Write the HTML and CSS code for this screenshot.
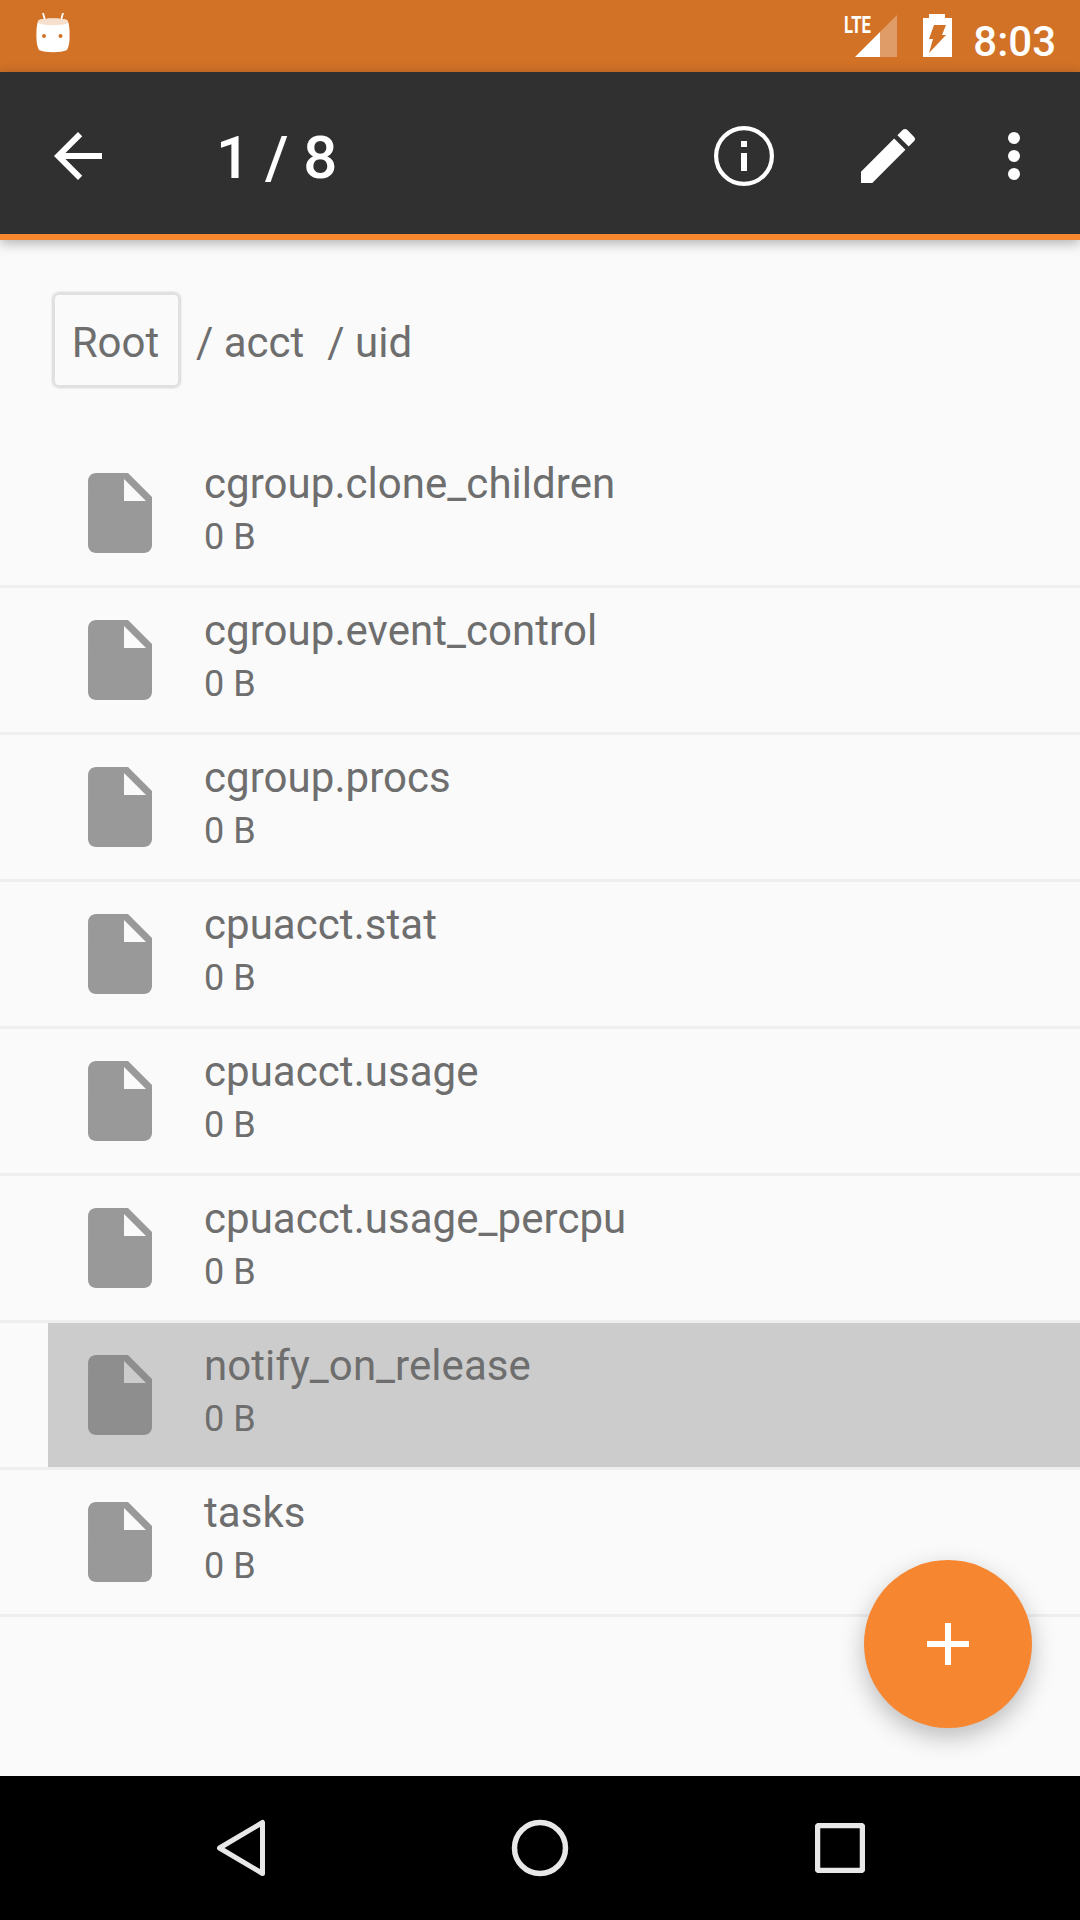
FILE: index.html
```html
<!DOCTYPE html>
<html lang="en">
<head>
    <meta charset="UTF-8">
    <title>1 / 8</title>
    <link rel="stylesheet" href="styles.css">
</head>
<body>
    <div class="phone">
        <!-- Status bar -->
        <div class="status-bar">
            <svg class="bot-icon" viewBox="0 0 34 41" width="34" height="41">
                <path d="M7 0l2.5 9M27 0l-2.5 9" stroke="#fff" stroke-width="1.8" fill="none"/>
                <path d="M3 7C10 5 24 5 31 7c2 2 2.6 8 2.6 15s-.6 11-2.6 15c-7 3-21 3-28 0C1 33 .4 29 .4 22S1 9 3 7z" fill="#fff"/>
                <path d="M3 7C10 5 24 5 31 7c.6.6 1 1.5 1.3 3-7 3-23 3-30.600 0C2 8.500 2.400 7.600 3 7z" fill="#f6dfcc"/>
                <circle cx="8" cy="23" r="2" fill="#d27227"/>
                <circle cx="24.5" cy="23" r="2" fill="#d27227"/>
            </svg>
            <div class="status-right">
                <svg class="signal-icon" viewBox="0 -6 54 50" width="54" height="50">
                    <text class="lte" x="0" y="19" textLength="27" lengthAdjust="spacingAndGlyphs">LTE</text>
                    <path d="M11 43h25V18z" fill="#fff"/>
                    <path d="M36 18l17-17v42H36z" fill="#fff" opacity="0.3"/>
                </svg>
                <svg class="battery-icon" viewBox="0 0 29 43" width="29" height="43">
                    <path d="M6 0h16v4h7v39H0V4h6z" fill="#fff"/>
                    <path d="M11 11h12l-4 10h4L6 39l4-14H6z" fill="#d27227"/>
                </svg>
                <span class="clock">8:03</span>
            </div>
        </div>

        <!-- Toolbar -->
        <div class="toolbar">
            <svg class="back-icon" viewBox="0 0 24 24" width="72" height="72">
                <path d="M20 11H7.83l5.59-5.59L12 4l-8 8 8 8 1.41-1.41L7.83 13H20v-2z" fill="#fff"/>
            </svg>
            <h1 class="title">1 / 8</h1>
            <svg class="info-icon" viewBox="0 0 24 24" width="72" height="72">
                <circle cx="12" cy="12" r="9.3" fill="none" stroke="#fff" stroke-width="1.4"/>
                <path d="M11 7h2v2h-2zM11 11h2v6h-2z" fill="#fff"/>
            </svg>
            <svg class="edit-icon" viewBox="0 0 24 24" width="72" height="72">
                <path d="M3 17.25V21h3.75L17.81 9.94l-3.75-3.75L3 17.25zM20.71 7.04c.39-.39.39-1.02 0-1.41l-2.34-2.34c-.39-.39-1.02-.39-1.41 0l-1.83 1.83 3.75 3.75 1.83-1.83z" fill="#fff"/>
            </svg>
            <svg class="more-icon" viewBox="0 0 12 48" width="12" height="48">
                <circle cx="6" cy="6" r="6" fill="#fff"/>
                <circle cx="6" cy="24" r="6" fill="#fff"/>
                <circle cx="6" cy="42" r="6" fill="#fff"/>
            </svg>
        </div>

        <!-- File list -->
        <div class="content">
            <div class="breadcrumb">
                <span class="crumb-root">Root</span>
                <span class="crumb">/ acct</span>
                <span class="crumb">/ uid</span>
            </div>

            <div class="file-list">
                <div class="file-row">
                    <div class="file-inner">
                        <svg class="file-icon" viewBox="0 0 24 24"><path d="M6 2c-1.1 0-1.99.9-1.99 2L4 20c0 1.1.89 2 1.99 2H18c1.1 0 2-.9 2-2V8l-6-6H6zm7 7V3.5L18.5 9H13z"/></svg>
                        <div class="file-text">
                            <div class="file-name">cgroup.clone_children</div>
                            <div class="file-size">0 B</div>
                        </div>
                    </div>
                </div>
                <div class="file-row">
                    <div class="file-inner">
                        <svg class="file-icon" viewBox="0 0 24 24"><path d="M6 2c-1.1 0-1.99.9-1.99 2L4 20c0 1.1.89 2 1.99 2H18c1.1 0 2-.9 2-2V8l-6-6H6zm7 7V3.5L18.5 9H13z"/></svg>
                        <div class="file-text">
                            <div class="file-name">cgroup.event_control</div>
                            <div class="file-size">0 B</div>
                        </div>
                    </div>
                </div>
                <div class="file-row">
                    <div class="file-inner">
                        <svg class="file-icon" viewBox="0 0 24 24"><path d="M6 2c-1.1 0-1.99.9-1.99 2L4 20c0 1.1.89 2 1.99 2H18c1.1 0 2-.9 2-2V8l-6-6H6zm7 7V3.5L18.5 9H13z"/></svg>
                        <div class="file-text">
                            <div class="file-name">cgroup.procs</div>
                            <div class="file-size">0 B</div>
                        </div>
                    </div>
                </div>
                <div class="file-row">
                    <div class="file-inner">
                        <svg class="file-icon" viewBox="0 0 24 24"><path d="M6 2c-1.1 0-1.99.9-1.99 2L4 20c0 1.1.89 2 1.99 2H18c1.1 0 2-.9 2-2V8l-6-6H6zm7 7V3.5L18.5 9H13z"/></svg>
                        <div class="file-text">
                            <div class="file-name">cpuacct.stat</div>
                            <div class="file-size">0 B</div>
                        </div>
                    </div>
                </div>
                <div class="file-row">
                    <div class="file-inner">
                        <svg class="file-icon" viewBox="0 0 24 24"><path d="M6 2c-1.1 0-1.99.9-1.99 2L4 20c0 1.1.89 2 1.99 2H18c1.1 0 2-.9 2-2V8l-6-6H6zm7 7V3.5L18.5 9H13z"/></svg>
                        <div class="file-text">
                            <div class="file-name">cpuacct.usage</div>
                            <div class="file-size">0 B</div>
                        </div>
                    </div>
                </div>
                <div class="file-row">
                    <div class="file-inner">
                        <svg class="file-icon" viewBox="0 0 24 24"><path d="M6 2c-1.1 0-1.99.9-1.99 2L4 20c0 1.1.89 2 1.99 2H18c1.1 0 2-.9 2-2V8l-6-6H6zm7 7V3.5L18.5 9H13z"/></svg>
                        <div class="file-text">
                            <div class="file-name">cpuacct.usage_percpu</div>
                            <div class="file-size">0 B</div>
                        </div>
                    </div>
                </div>
                <div class="file-row selected">
                    <div class="file-inner">
                        <svg class="file-icon" viewBox="0 0 24 24"><path d="M6 2c-1.1 0-1.99.9-1.99 2L4 20c0 1.1.89 2 1.99 2H18c1.1 0 2-.9 2-2V8l-6-6H6zm7 7V3.5L18.5 9H13z"/></svg>
                        <div class="file-text">
                            <div class="file-name">notify_on_release</div>
                            <div class="file-size">0 B</div>
                        </div>
                    </div>
                </div>
                <div class="file-row">
                    <div class="file-inner">
                        <svg class="file-icon" viewBox="0 0 24 24"><path d="M6 2c-1.1 0-1.99.9-1.99 2L4 20c0 1.1.89 2 1.99 2H18c1.1 0 2-.9 2-2V8l-6-6H6zm7 7V3.5L18.5 9H13z"/></svg>
                        <div class="file-text">
                            <div class="file-name">tasks</div>
                            <div class="file-size">0 B</div>
                        </div>
                    </div>
                </div>
            </div>

            <div class="fab">
                <svg viewBox="0 0 42 42" width="42" height="42"><path d="M18 0h6v18h18v6H24v18h-6V24H0v-6h18z" fill="#fff"/></svg>
            </div>
        </div>

        <!-- Navigation bar -->
        <div class="nav-bar">
            <svg class="nav-back" viewBox="0 0 50 58" width="50" height="58">
                <path d="M46.5 3.5v51L3.5 29z" fill="none" stroke="#e8e8e8" stroke-width="5" stroke-linejoin="round"/>
            </svg>
            <svg class="nav-home" viewBox="0 0 58 58" width="58" height="58">
                <circle cx="29" cy="29" r="25.5" fill="none" stroke="#e8e8e8" stroke-width="5.5"/>
            </svg>
            <svg class="nav-recent" viewBox="0 0 50 50" width="50" height="50">
                <rect x="2.5" y="2.5" width="45" height="45" rx="1.5" fill="none" stroke="#e8e8e8" stroke-width="5.5"/>
            </svg>
        </div>
    </div>
</body>
</html>
```

FILE: styles.css
```css
* {
    margin: 0;
    padding: 0;
    box-sizing: border-box;
    font-family: 'Roboto', sans-serif;
}

body {
    width: 1080px;
    height: 1920px;
    overflow: hidden;
    background: #fafafa;
}

.phone {
    height: 1920px;
    display: flex;
    flex-direction: column;
}

/* Status bar */
.status-bar {
    height: 72px;
    flex: none;
    display: flex;
    align-items: flex-start;
    justify-content: space-between;
    padding: 13px 24px 0 36px;
    background: #d27227;
}

.status-right {
    display: flex;
    align-items: flex-start;
    margin-top: -5px;
}

.lte {
    font-family: 'Roboto', sans-serif;
    font-size: 24px;
    font-weight: 700;
    fill: #fff;
}

.battery-icon {
    margin-left: 25px;
    margin-top: 6px;
}

.clock {
    margin-left: 21px;
    margin-top: 9px;
    font-size: 42px;
    line-height: 49px;
    font-weight: 500;
    color: #fff;
}

/* Toolbar */
.toolbar {
    height: 168px;
    flex: none;
    display: flex;
    align-items: flex-start;
    padding-top: 48px;
    background: #303030;
    border-bottom: 6px solid #f68630;
    box-shadow: 0 3px 12px rgba(0, 0, 0, 0.3);
    position: relative;
    z-index: 2;
}

.back-icon {
    margin-left: 42px;
}

.title {
    margin-left: 102px;
    margin-top: 2px;
    width: 492px;
    font-size: 60px;
    line-height: 72px;
    font-weight: 500;
    color: #fff;
}

.edit-icon {
    margin-left: 72px;
}

.more-icon {
    margin-left: 84px;
    margin-top: 12px;
}

/* Content */
.content {
    flex: 1;
    position: relative;
    background: #fafafa;
}

.breadcrumb {
    height: 201px;
    display: flex;
    align-items: flex-start;
    padding: 53px 0 0 53px;
    font-size: 42px;
    color: #6e6e6e;
}

.crumb-root {
    width: 127px;
    height: 94px;
    padding: 23px 2px 0 0;
    line-height: 50px;
    text-align: center;
    border: 2px solid #e0e0e0;
    border-radius: 6px;
    box-shadow: 0 0 3px rgba(0, 0, 0, 0.3);
}

.crumb {
    margin-left: 16px;
    margin-top: 25px;
    margin-right: 7px;
    line-height: 50px;
}

.file-row {
    height: 147px;
    border-bottom: 3px solid #eeeeee;
}

.file-inner {
    height: 144px;
    margin-left: 48px;
    padding-left: 24px;
    display: flex;
    align-items: flex-start;
}

.selected .file-inner {
    background: #cccccc;
}

.file-icon {
    width: 96px;
    height: 96px;
    margin-top: 24px;
    flex: none;
    fill: #999999;
    fill-rule: evenodd;
}

.selected .file-icon {
    fill: #8e8e8e;
}

.file-text {
    margin-left: 36px;
    padding-top: 18px;
}

.file-name {
    font-size: 42px;
    line-height: 50px;
    letter-spacing: 0.05px;
    color: #6e6e6e;
}

.file-size {
    margin-top: 7px;
    font-size: 36px;
    line-height: 42px;
    color: #6e6e6e;
}

.fab {
    position: absolute;
    right: 48px;
    bottom: 48px;
    width: 168px;
    height: 168px;
    display: flex;
    align-items: center;
    justify-content: center;
    border-radius: 50%;
    background: #f68630;
    box-shadow: 0 9px 24px rgba(0, 0, 0, 0.25);
}

/* Navigation bar */
.nav-bar {
    height: 144px;
    flex: none;
    display: flex;
    align-items: center;
    padding-left: 216px;
    background: #000;
}

.nav-home {
    margin-left: 245px;
}

.nav-recent {
    margin-left: 246px;
}
```
